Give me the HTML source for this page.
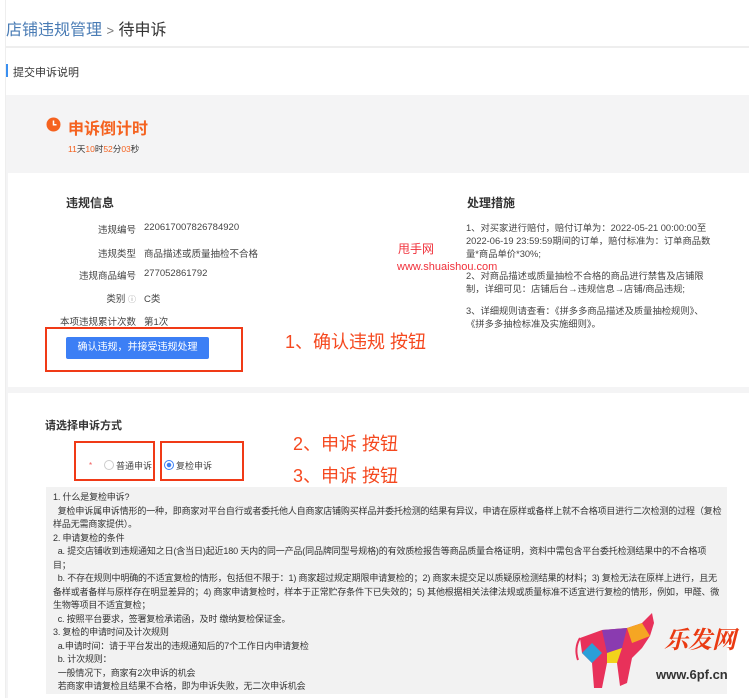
<!DOCTYPE html>
<html><head><meta charset="utf-8"><style>
body{margin:0;width:749px;height:698px;overflow:hidden;background:#fff;font-family:"Liberation Sans","Noto Sans CJK SC",sans-serif;position:relative;color:#333}
.a{position:absolute;white-space:nowrap}
.lbl{position:absolute;width:100px;text-align:right;font-size:9.5px;color:#444}
.val{position:absolute;left:144px;font-size:9.5px;color:#444;white-space:nowrap}
.r{position:absolute;border:2px solid #f03a17}
.note{position:absolute;color:#f5481f;font-size:18px;white-space:nowrap}
</style></head><body>
<div style="position:absolute;left:5px;top:0;width:1px;height:698px;background:#eee"></div>
<div class="a" style="left:6px;top:16px;font-size:16px;color:#4a7cb5">店铺违规管理 <span style="color:#777;font-size:13px">&gt;</span> <span style="color:#333">待申诉</span></div>
<div style="position:absolute;left:6px;top:46px;width:743px;height:2px;background:#eee"></div>
<div style="position:absolute;left:6px;top:64px;width:2px;height:13px;background:#3a8ff0"></div>
<div class="a" style="left:13px;top:64px;font-size:11px;color:#333">提交申诉说明</div>
<div style="position:absolute;left:6px;top:95px;width:743px;height:603px;background:#f4f4f5"></div>
<svg style="position:absolute;left:46px;top:117px" width="15" height="15"><circle cx="7.5" cy="7.5" r="7" fill="#f5621f"/><path d="M7.5 3.5V7.8H10.5" stroke="#fff" stroke-width="1.5" fill="none"/></svg>
<div class="a" style="left:68px;top:115px;font-size:16px;color:#f5621f;font-weight:bold">申诉倒计时</div>
<div class="a" style="left:68px;top:143px;font-size:8.5px;color:#333"><span style="color:#f5621f">11</span>天<span style="color:#f5621f">10</span>时<span style="color:#f5621f">52</span>分<span style="color:#f5621f">03</span>秒</div>
<div style="position:absolute;left:8px;top:173px;width:741px;height:214px;background:#fff"></div>
<div style="position:absolute;left:8px;top:393px;width:741px;height:305px;background:#fff"></div>
<div class="a" style="left:66px;top:194px;font-size:12px;font-weight:bold;color:#333">违规信息</div>
<div class="lbl" style="left:36px;top:222px">违规编号</div><div class="val" style="top:222px">220617007826784920</div>
<div class="lbl" style="left:36px;top:246px">违规类型</div><div class="val" style="top:246px">商品描述或质量抽检不合格</div>
<div class="lbl" style="left:36px;top:268px">违规商品编号</div><div class="val" style="top:268px">277052861792</div>
<div class="lbl" style="left:36px;top:291px">类别 <span style="color:#999;font-size:8px">ⓘ</span></div><div class="val" style="top:291px">C类</div>
<div class="lbl" style="left:36px;top:314px">本项违规累计次数</div><div class="val" style="top:314px">第1次</div>
<div class="r" style="left:45px;top:327px;width:194px;height:41px"></div>
<div class="a" style="left:66px;top:337px;width:143px;height:22px;background:#3c7ff5;border-radius:2px;color:#fff;font-size:10px;text-align:center;line-height:22px">确认违规，并接受违规处理</div>
<div class="note" style="left:285px;top:328px">1、确认违规 按钮</div>
<div class="a" style="left:467px;top:194px;font-size:12px;font-weight:bold;color:#333">处理措施</div>
<div style="position:absolute;left:466px;top:222px;width:245px;font-size:9.3px;line-height:13px;color:#444">1、对买家进行赔付，赔付订单为：2022-05-21 00:00:00至 2022-06-19 23:59:59期间的订单，赔付标准为：订单商品数量*商品单价*30%;<div style="height:9px"></div>2、对商品描述或质量抽检不合格的商品进行禁售及店铺限制，详细可见：店铺后台→违规信息→店铺/商品违规;<div style="height:9px"></div>3、详细规则请查看：《拼多多商品描述及质量抽检规则》、《拼多多抽检标准及实施细则》。</div>
<div class="a" style="left:398px;top:240px;font-size:12px;color:#f0303a">甩手网</div>
<div class="a" style="left:397px;top:261px;font-size:11px;color:#f0303a">www.shuaishou.com</div>
<div class="a" style="left:45px;top:417px;font-size:11px;font-weight:bold;color:#333">请选择申诉方式</div>
<div class="r" style="left:74px;top:441px;width:77px;height:36px"></div>
<div class="r" style="left:160px;top:441px;width:80px;height:36px"></div>
<div class="a" style="left:89px;top:461px;font-size:8px;color:#f05a5a">*</div>
<div style="position:absolute;left:104px;top:460px;width:8px;height:8px;border:1px solid #ccc;border-radius:50%"></div>
<div class="a" style="left:116px;top:459px;font-size:9px;color:#444">普通申诉</div>
<div style="position:absolute;left:164px;top:460px;width:8px;height:8px;border:1px solid #3c7ff5;border-radius:50%;background:radial-gradient(#3c7ff5 35%,#fff 45%)"></div>
<div class="a" style="left:176px;top:459px;font-size:9px;color:#444">复检申诉</div>
<div class="note" style="left:293px;top:430px">2、申诉 按钮</div>
<div class="note" style="left:293px;top:462px">3、申诉 按钮</div>
<div style="position:absolute;left:46px;top:487px;width:681px;height:207px;background:#f2f2f2"></div>
<div style="position:absolute;left:53px;top:491px;width:670px;font-size:9px;letter-spacing:-0.15px;line-height:13.5px;color:#333">1. 什么是复检申诉?<br>&nbsp;&nbsp;复检申诉属申诉情形的一种，即商家对平台自行或者委托他人自商家店铺购买样品并委托检测的结果有异议，申请在原样或备样上就不合格项目进行二次检测的过程（复检样品无需商家提供）。<br>2. 申请复检的条件<br>&nbsp;&nbsp;a. 提交店铺收到违规通知之日(含当日)起近180 天内的同一产品(同品牌同型号规格)的有效质检报告等商品质量合格证明，资料中需包含平台委托检测结果中的不合格项目；<br>&nbsp;&nbsp;b. 不存在规则中明确的不适宜复检的情形，包括但不限于：1) 商家超过规定期限申请复检的；2) 商家未提交足以质疑原检测结果的材料；3) 复检无法在原样上进行，且无备样或者备样与原样存在明显差异的；4) 商家申请复检时，样本于正常贮存条件下已失效的；5) 其他根据相关法律法规或质量标准不适宜进行复检的情形，例如，甲醛、微生物等项目不适宜复检；<br>&nbsp;&nbsp;c. 按照平台要求，签署复检承诺函，及时 缴纳复检保证金。<br>3. 复检的申请时间及计次规则<br>&nbsp;&nbsp;a.申请时间：请于平台发出的违规通知后的7个工作日内申请复检<br>&nbsp;&nbsp;b. 计次规则：<br>&nbsp;&nbsp;一般情况下，商家有2次申诉的机会<br>&nbsp;&nbsp;若商家申请复检且结果不合格，即为申诉失败，无二次申诉机会</div>
<svg style="position:absolute;left:572px;top:608px" width="90" height="85"><polygon points="8,30 30,22 55,20 70,15 80,5 82,15 78,28 70,40 60,50 55,75 48,78 45,55 35,55 30,80 22,80 20,55 10,45" fill="#e8315a"/><polygon points="30,22 55,20 50,40 35,45" fill="#8a3bb0"/><polygon points="55,20 70,15 78,28 60,35" fill="#f5a623"/><polygon points="10,45 20,55 30,45 20,35" fill="#2a9fd8"/><polygon points="35,45 50,40 45,55 35,55" fill="#f2d21b"/><path d="M8,30 Q2,40 6,52" stroke="#e8315a" stroke-width="2" fill="none"/></svg>
<div class="a" style="left:664px;top:620px;font-size:24px;color:#ea3a12;font-weight:bold;font-style:italic;font-family:'Noto Serif CJK SC',serif">乐发网</div>
<div class="a" style="left:656px;top:667px;font-size:13px;color:#333;font-weight:bold">www.6pf.cn</div>
</body></html>
